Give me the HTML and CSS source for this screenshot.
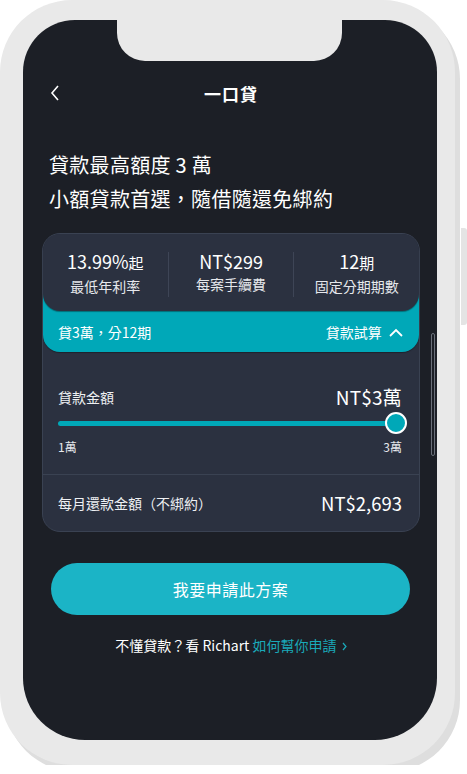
FILE: index.html
```html
<!doctype html>
<html>
<head>
<meta charset="utf-8">
<meta name="viewport" content="width=device-width, initial-scale=1.0">
<link rel="stylesheet" href="styles.css">
<title>一口貸</title>
</head>
<body>
<div class="phone">
  <div class="side-button"></div>
  <div class="screen">
    <div class="notch"></div>
    <div class="scrollbar"></div>

    <div class="header">
      <svg class="back" width="10" height="16" viewBox="0 0 10 16"><polyline points="8,1 2,8 8,15" fill="none" stroke="#fff" stroke-width="1.6"/></svg>
      <h1>一口貸</h1>
    </div>

    <div class="headline">
      <p>貸款最高額度 3 萬</p>
      <p>小額貸款首選，隨借隨還免綁約</p>
    </div>

    <div class="card">
      <div class="stats">
        <div class="stat">
          <div class="stat-value">13.99%<small>起</small></div>
          <div class="stat-label">最低年利率</div>
        </div>
        <div class="stat">
          <div class="stat-value">NT$299</div>
          <div class="stat-label">每案手續費</div>
        </div>
        <div class="stat">
          <div class="stat-value">12<small>期</small></div>
          <div class="stat-label">固定分期期數</div>
        </div>
      </div>

      <div class="band">
        <span>貸3萬，分12期</span>
        <span class="toggle">貸款試算
          <svg width="14" height="9" viewBox="0 0 14 9"><polyline points="1,8 7,2 13,8" fill="none" stroke="#fff" stroke-width="1.8"/></svg>
        </span>
      </div>

      <div class="calc">
        <div class="row">
          <span class="label">貸款金額</span>
          <span class="amount">NT$3萬</span>
        </div>
        <div class="slider">
          <div class="track"></div>
          <div class="thumb"></div>
        </div>
        <div class="ticks">
          <span>1萬</span>
          <span>3萬</span>
        </div>
      </div>

      <div class="monthly">
        <span class="label">每月還款金額（不綁約）</span>
        <span class="amount">NT$2,693</span>
      </div>
    </div>

    <a class="apply" href="#">我要申請此方案</a>

    <p class="help">不懂貸款？看 Richart <a href="#">如何幫你申請</a>
      <svg width="5" height="9" viewBox="0 0 5 9"><polyline points="1,1 4,4.5 1,8" fill="none" stroke="#1aa9b9" stroke-width="1.2"/></svg>
    </p>
  </div>
</div>
</body>
</html>
```

FILE: styles.css
```css
body {
    margin: 0;
    background: #fff;
    font-family: "Noto Sans CJK TC", "Noto Sans", sans-serif;
    color: #fff;
}
p {
    margin: 0;
}

.phone {
    position: relative;
    width: 455px;
    height: 765px;
    box-sizing: border-box;
    padding: 20px 18px 25px 23px;
    background: #e9e9e9;
    border-radius: 72px;
    box-shadow: 5px 7px 0 #dedede;
}
.side-button {
    position: absolute;
    left: 461px;
    top: 228px;
    width: 6px;
    height: 97px;
    background: #e4e4e4;
    border-radius: 0 3px 3px 0;
}
.screen {
    position: relative;
    height: 720px;
    box-sizing: border-box;
    padding: 0 17px 0 19px;
    background: #1c1f26;
    border-radius: 52px 52px 62px 62px;
    overflow: hidden;
}
.notch {
    position: absolute;
    left: 94px;
    top: 0;
    width: 225px;
    height: 41px;
    background: #e9e9e9;
    border-radius: 0 0 28px 28px;
}
.scrollbar {
    position: absolute;
    left: 408px;
    top: 313px;
    width: 2px;
    height: 121px;
    border: 1px solid #6b707a;
    border-radius: 2px;
}

.header {
    position: relative;
    display: flex;
    justify-content: center;
    align-items: center;
    height: 28px;
    margin-top: 59px;
}
.header .back {
    position: absolute;
    left: 8px;
    top: 6px;
}
.header h1 {
    margin: 0;
    font-size: 17px;
    font-weight: 700;
    letter-spacing: 1px;
}

.headline {
    margin: 41px 0 0 7px;
    font-size: 20px;
    line-height: 34px;
    letter-spacing: 0.3px;
}

.card {
    margin-top: 17px;
    background: #2b3140;
    border: 1px solid #3a4252;
    border-radius: 18px;
}
.stats {
    position: relative;
    z-index: 2;
    display: flex;
    align-items: center;
    height: 77px;
    padding-top: 4px;
    box-sizing: border-box;
    background: #2b3140;
    border-radius: 17px;
    box-shadow: 0 1px 1px rgba(0, 0, 0, 0.35);
}
.stat {
    flex: 1;
    text-align: center;
    border-left: 1px solid #3e4556;
    height: 45px;
}
.stat:first-child {
    border-left: 0;
}
.stat-value {
    font-size: 18px;
    line-height: 24px;
    margin-top: -3px;
}
.stat-value small {
    font-size: 15px;
}
.stat-label {
    font-size: 14px;
    line-height: 22px;
    color: #e6e8ec;
}

.band {
    position: relative;
    z-index: 1;
    display: flex;
    justify-content: space-between;
    align-items: center;
    margin-top: -18px;
    padding: 18px 16px 0 15px;
    height: 41px;
    background: #00a8b8;
    border-radius: 0 0 17px 17px;
    box-shadow: 0 1px 1px rgba(0, 0, 0, 0.3);
    font-size: 14px;
}
.toggle svg {
    margin-left: 4px;
    vertical-align: 1px;
}

.calc {
    padding: 31px 17px 18px 15px;
    border-bottom: 1px solid #3a4252;
}
.row,
.monthly {
    display: flex;
    justify-content: space-between;
    align-items: center;
}
.label {
    font-size: 14px;
    color: #eef0f3;
}
.amount {
    font-size: 19px;
    letter-spacing: 0.2px;
}
.slider {
    position: relative;
    height: 22px;
    margin-top: 2px;
    display: flex;
    align-items: center;
}
.track {
    flex: 1;
    height: 5px;
    margin-right: 6px;
    background: #00a8b8;
    border-radius: 3px;
}
.thumb {
    position: absolute;
    right: -5px;
    top: 0;
    width: 18px;
    height: 18px;
    background: #00a8b8;
    border: 2px solid #fff;
    border-radius: 50%;
}
.ticks {
    display: flex;
    justify-content: space-between;
    margin-top: 4px;
    font-size: 12px;
    line-height: 18px;
    color: #e6e8ec;
}
.monthly {
    height: 56px;
    padding: 0 17px 0 15px;
}
.monthly .amount {
    font-size: 18.5px;
    letter-spacing: 0;
}

.apply {
    display: block;
    margin: 31px 10px 0 9px;
    height: 52px;
    line-height: 52px;
    text-align: center;
    background: #1bb4c6;
    border-radius: 26px;
    color: #fff;
    font-size: 16px;
    text-decoration: none;
    letter-spacing: 0.5px;
}
.help {
    margin-top: 20px;
    text-align: center;
    font-size: 14px;
    line-height: 20px;
}
.help a {
    color: #1aa9b9;
    text-decoration: none;
}
.help svg {
    margin-left: 2px;
}
```
